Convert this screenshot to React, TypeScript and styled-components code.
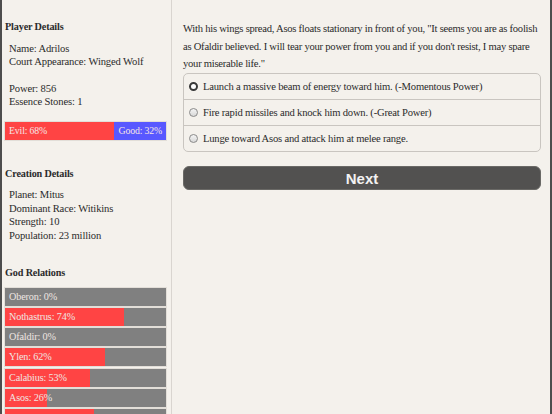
import React, {useState} from 'react';
import styled, {createGlobalStyle} from 'styled-components';

const GlobalStyle = createGlobalStyle`
  html, body {
    margin: 0;
    padding: 0;
    background: #f4f1ec;
  }
  body {
    font-family: "Liberation Serif", "Times New Roman", serif;
    color: #2b2b2b;
  }
`;

const Page = styled.div`
  display: flex;
  height: 414px;
  overflow: hidden;
  box-sizing: border-box;
  border-left: 2px solid #4d4d4d;
  border-right: 2px solid #4d4d4d;
  background: #f4f1ec;
`;

const Sidebar = styled.aside`
  width: 170px;
  flex: none;
  box-sizing: border-box;
  border-right: 1px solid #d9d5d0;
  padding: 20px 5px 0 3px;
  font-size: 10.6px;
  letter-spacing: -0.15px;
`;

const SectionTitle = styled.h3`
  margin: 0 0 7.5px;
  font-size: 10.2px;
  font-weight: bold;
  line-height: 14px;
`;

const Group = styled.div`
  padding-left: 4px;
  margin-bottom: 13px;
  line-height: 13.5px;
  &:last-child {
    margin-bottom: 0;
  }
`;

const Section = styled.section<{$gap: number}>`
  margin-bottom: ${(p) => p.$gap}px;
`;

const Split = styled.div`
  display: flex;
  height: 18px;
  margin-top: 3px;
  box-shadow: 0 0 0 1px #e2ded8;
  line-height: 18px;
  font-size: 9.8px;
  color: #f6e4e4;
`;

const SplitPart = styled.div<{$color: string}>`
  background: ${(p) => p.$color};
  padding-left: 4px;
  box-sizing: border-box;
  white-space: nowrap;
`;

const RelList = styled.div`
  display: flex;
  flex-direction: column;
  gap: 2.33px;
  margin-top: 2.5px;
`;

const RelBar = styled.div`
  position: relative;
  height: 18px;
  background: #808080;
  box-shadow: 0 0 0 1px #e2ded8;
  line-height: 18px;
  font-size: 10.2px;
  color: #efe6e2;
  flex: none;
`;

const RelFill = styled.div`
  height: 100%;
  background: #ff4444;
`;

const RelLabel = styled.span`
  position: absolute;
  left: 4px;
  top: 0;
`;

const Main = styled.main`
  flex: 1;
  padding: 20px 9px 0 11px;
`;

const Story = styled.p`
  margin: 0;
  font-size: 10.6px;
  letter-spacing: -0.25px;
  line-height: 17.7px;
  color: #2a2a2a;
`;

const Choices = styled.div`
  border: 1px solid #c9c5c0;
  border-radius: 5px;
  overflow: hidden;
  margin-bottom: 14px;
`;

const Choice = styled.label`
  display: flex;
  align-items: center;
  gap: 5px;
  height: 25px;
  padding-left: 5px;
  font-size: 10.6px;
  letter-spacing: -0.2px;
  cursor: pointer;
  & + & {
    border-top: 1px solid #c9c5c0;
  }
`;

const Radio = styled.span<{$on: boolean}>`
  width: 9px;
  height: 9px;
  border-radius: 50%;
  box-sizing: border-box;
  flex: none;
  border: ${(p) => (p.$on ? '2.5px solid #3a3a3a' : '1px solid #8a8a8a')};
  background: ${(p) => (p.$on ? '#ffffff' : 'linear-gradient(#f4f4f4, #d8d8d8)')};
`;

const NextButton = styled.button`
  display: block;
  width: 100%;
  height: 24px;
  border: 1px solid #6a6966;
  border-radius: 6px;
  background: #525150;
  color: #f2f2f2;
  font-family: "Liberation Sans", Arial, sans-serif;
  font-weight: bold;
  font-size: 15px;
  cursor: pointer;
`;

const relations = [
  {name: 'Oberon', value: 0},
  {name: 'Nothastrus', value: 74},
  {name: 'Ofaldir', value: 0},
  {name: 'Ylen', value: 62},
  {name: 'Calabius', value: 53},
  {name: 'Asos', value: 26},
  {name: 'Tarvos', value: 55},
];

const options = [
  'Launch a massive beam of energy toward him. (-Momentous Power)',
  'Fire rapid missiles and knock him down. (-Great Power)',
  'Lunge toward Asos and attack him at melee range.',
];

export default function App() {
  const [choice, setChoice] = useState(0);
  return (
    <>
      <GlobalStyle />
      <Page>
        <Sidebar>
          <Section $gap={27}>
            <SectionTitle>Player Details</SectionTitle>
            <Group>
              <div>Name: Adrilos</div>
              <div>Court Appearance: Winged Wolf</div>
            </Group>
            <Group>
              <div>Power: 856</div>
              <div>Essence Stones: 1</div>
            </Group>
            <Split>
              <SplitPart $color="#ff4444" style={{width: '68%'}}>Evil: 68%</SplitPart>
              <SplitPart $color="#5858ff" style={{width: '32%'}}>Good: 32%</SplitPart>
            </Split>
          </Section>
          <Section $gap={24}>
            <SectionTitle>Creation Details</SectionTitle>
            <Group>
              <div>Planet: Mitus</div>
              <div>Dominant Race: Witikins</div>
              <div>Strength: 10</div>
              <div>Population: 23 million</div>
            </Group>
          </Section>
          <Section $gap={0}>
            <SectionTitle>God Relations</SectionTitle>
            <RelList>
              {relations.map((r) => (
                <RelBar key={r.name}>
                  <RelFill style={{width: `${r.value}%`}} />
                  <RelLabel>
                    {r.name}: {r.value}%
                  </RelLabel>
                </RelBar>
              ))}
            </RelList>
          </Section>
        </Sidebar>
        <Main>
          <Story>
            With his wings spread, Asos floats stationary in front of you, "It seems you are as
            foolish as Ofaldir believed. I will tear your power from you and if you don't resist,
            I may spare your miserable life."
          </Story>
          <Choices>
            {options.map((o, i) => (
              <Choice key={o} onClick={() => setChoice(i)}>
                <Radio $on={choice === i} />
                {o}
              </Choice>
            ))}
          </Choices>
          <NextButton>Next</NextButton>
        </Main>
      </Page>
    </>
  );
}
